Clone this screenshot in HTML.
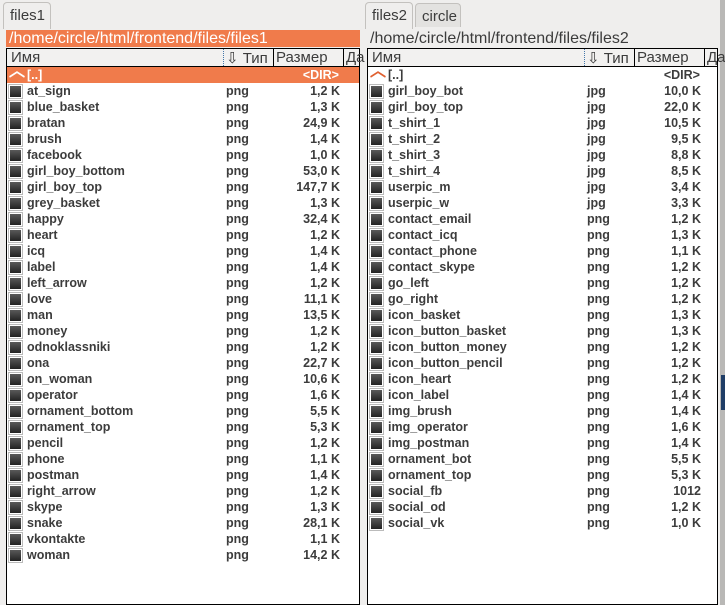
<!DOCTYPE html>
<html><head><meta charset="utf-8"><style>
*{margin:0;padding:0;box-sizing:border-box}
body{width:725px;height:605px;background:#efeeed;position:relative;overflow:hidden;font-family:"Liberation Sans","DejaVu Sans",sans-serif}
.a{position:absolute;white-space:nowrap}
.tab{position:absolute;border:1px solid #c3c1be;border-bottom:none;border-radius:4px 4px 0 0;font-size:15px;color:#3c3c3c;padding:4px 0 0 6px}
.path{position:absolute;height:17px;font-size:16px;line-height:17px;padding-left:3px;color:#3c3c3c}
.list{position:absolute;background:#fff;border:1px solid #000;top:48px;bottom:0}
.hdr{position:absolute;left:0;right:0;top:0;height:18px;background:#f2f1f0;border-bottom:1px solid #000;font-size:15px;color:#3c3c3c}
.hdr span{position:absolute;top:0px}
.sep{position:absolute;top:0;height:17px;border-left:1px solid #000}
.row{position:absolute;left:0;right:0;height:16px;font-size:12.5px;font-weight:bold;color:#3c3c3c;line-height:16px}
.row .ic{position:absolute;left:1px;top:1px;width:15px;height:15px;border:1px solid #bbb;background:#fff}
.row .ic:after{content:"";position:absolute;left:1px;top:1px;width:11px;height:11px;background:linear-gradient(#5a5a5a,#222)}
.row .n{position:absolute;left:20px}
.row .t{position:absolute}
.row .s{position:absolute;text-align:right}
.up{background:#f07b4b;color:#fff}
</style></head><body>
<div class="a" style="left:720px;top:0;width:5px;height:605px;background:#b9b8b6"></div>
<div class="a" style="left:721px;top:375px;width:4px;height:35px;background:#1f3d66"></div>

<div class="tab" style="left:3px;top:2px;width:48px;height:27px;background:#efeeed">files1</div>
<div class="path" style="left:6px;top:30px;width:354px;background:#f07b4b;color:#fff">/home/circle/html/frontend/files/files1</div>

<div class="tab" style="left:365px;top:2px;width:48px;height:27px;background:#efeeed">files2</div>
<div class="tab" style="left:415px;top:3px;width:46px;height:24px;background:#e3e2e0">circle</div>
<div class="path" style="left:367px;top:30px;width:351px">/home/circle/html/frontend/files/files2</div>

<div class="list" id="L" style="left:6px;width:354px"></div>
<div class="list" id="R" style="left:367px;width:351px"></div>

<script>
function build(id,off,items){
 var el=document.getElementById(id),h='';
 h+='<div class="hdr"><span style="left:4px">Имя</span><div class="sep" style="left:'+(216+off)+'px;border-left:1px dotted #47a"></div><span style="left:'+(219+off)+'px">⇩ Тип</span><div class="sep" style="left:'+(266+off)+'px"></div><span style="left:'+(269+off)+'px">Размер</span><div class="sep" style="left:'+(336+off)+'px"></div><span style="left:'+(339+off)+'px">Да</span></div>';
 var up=id=='L';
 h+='<div class="row'+(up?' up':'')+'" style="top:18px"><span class="a" style="left:2px;top:-3px;color:'+(up?'#fff':'#e06030')+';font-size:16px">︿</span><span class="n">[..]</span><span class="s" style="left:'+(240+off)+'px;width:92px;">&lt;DIR&gt;</span></div>';
 items.forEach(function(r,i){
  h+='<div class="row" style="top:'+(34+i*16)+'px"><div class="ic"></div><span class="n">'+r[0]+'</span><span class="t" style="left:'+(219+off)+'px">'+r[1]+'</span><span class="s" style="left:'+(240+off)+'px;width:93px">'+r[2]+'</span></div>';
 });
 el.innerHTML=h;
}
var L=[["at_sign","png","1,2 K"],["blue_basket","png","1,3 K"],["bratan","png","24,9 K"],["brush","png","1,4 K"],["facebook","png","1,0 K"],["girl_boy_bottom","png","53,0 K"],["girl_boy_top","png","147,7 K"],["grey_basket","png","1,3 K"],["happy","png","32,4 K"],["heart","png","1,2 K"],["icq","png","1,4 K"],["label","png","1,4 K"],["left_arrow","png","1,2 K"],["love","png","11,1 K"],["man","png","13,5 K"],["money","png","1,2 K"],["odnoklassniki","png","1,2 K"],["ona","png","22,7 K"],["on_woman","png","10,6 K"],["operator","png","1,6 K"],["ornament_bottom","png","5,5 K"],["ornament_top","png","5,3 K"],["pencil","png","1,2 K"],["phone","png","1,1 K"],["postman","png","1,4 K"],["right_arrow","png","1,2 K"],["skype","png","1,3 K"],["snake","png","28,1 K"],["vkontakte","png","1,1 K"],["woman","png","14,2 K"]];
var R=[["girl_boy_bot","jpg","10,0 K"],["girl_boy_top","jpg","22,0 K"],["t_shirt_1","jpg","10,5 K"],["t_shirt_2","jpg","9,5 K"],["t_shirt_3","jpg","8,8 K"],["t_shirt_4","jpg","8,5 K"],["userpic_m","jpg","3,4 K"],["userpic_w","jpg","3,3 K"],["contact_email","png","1,2 K"],["contact_icq","png","1,3 K"],["contact_phone","png","1,1 K"],["contact_skype","png","1,2 K"],["go_left","png","1,2 K"],["go_right","png","1,2 K"],["icon_basket","png","1,3 K"],["icon_button_basket","png","1,3 K"],["icon_button_money","png","1,2 K"],["icon_button_pencil","png","1,2 K"],["icon_heart","png","1,2 K"],["icon_label","png","1,4 K"],["img_brush","png","1,4 K"],["img_operator","png","1,6 K"],["img_postman","png","1,4 K"],["ornament_bot","png","5,5 K"],["ornament_top","png","5,3 K"],["social_fb","png","1012"],["social_od","png","1,2 K"],["social_vk","png","1,0 K"]];
build('L',0,L);build('R',0,R);
</script>
</body></html>
